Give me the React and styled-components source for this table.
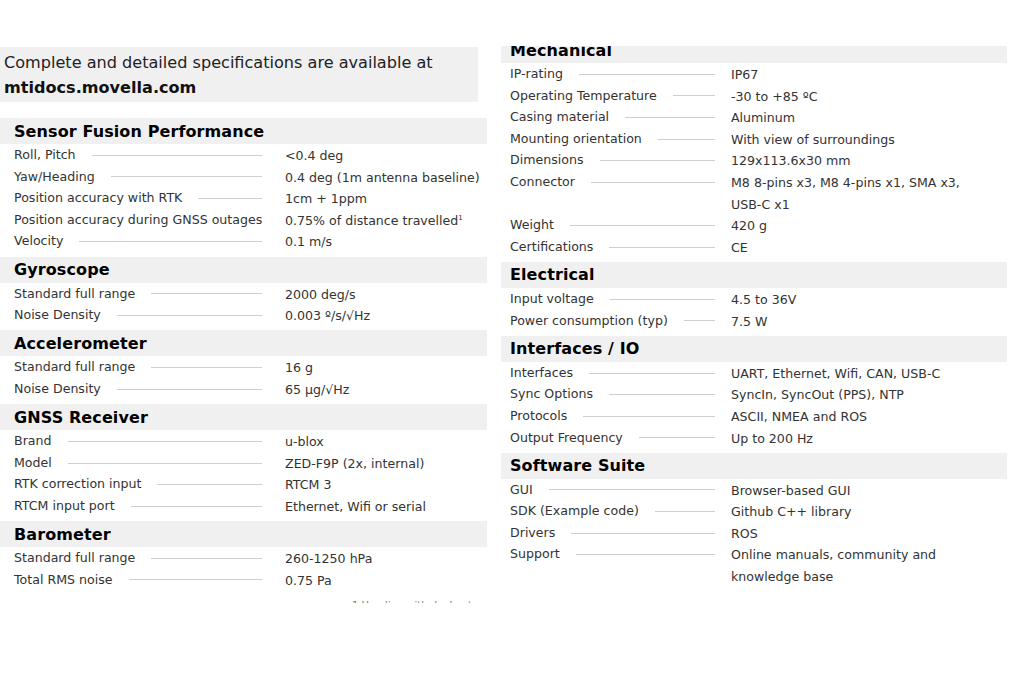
import React from 'react';
import styled, { createGlobalStyle } from 'styled-components';

const GlobalStyle = createGlobalStyle`
  html, body {
    margin: 0;
    padding: 0;
    background: #fff;
  }
  body {
    font-family: "DejaVu Sans", Verdana, sans-serif;
    color: #333;
  }
`;

const Page = styled.div`
  width: 1024px;
  height: 673px;
  display: flex;
  align-items: flex-start;
  overflow: hidden;
`;

const LeftCol = styled.div`
  width: 487px;
  padding-top: 47px;
  display: flex;
  flex-direction: column;
`;

const RightCol = styled.div`
  width: 506px;
  margin-left: 14px;
  margin-top: 46px;
  overflow: hidden;
`;

// the right column is cropped at the top, through the Mechanical header
const RightInner = styled.div`
  margin-top: -9px;
`;

const InfoBox = styled.div`
  width: 478px;
  height: 55px;
  background: #f0f0f1;
  padding: 3px 0 0 4px;
  box-sizing: border-box;
  font-size: 16.1px;
  line-height: 25px;
  color: #222;
  margin-bottom: 16px;
`;

const Strong = styled.span`
  font-weight: 700;
  color: #111;
`;

const Section = styled.section`
  margin-bottom: 4.6px;
`;

const Band = styled.h3`
  margin: 0;
  height: 26px;
  background: #f0f0f1;
  display: flex;
  align-items: center;
  padding-left: ${({ $pad }) => $pad}px;
  font-size: 16px;
  font-weight: 700;
  color: #000;
  letter-spacing: 0.1px;
`;

const Row = styled.div`
  display: grid;
  grid-template-columns: ${({ $label }) => $label}px 1fr;
  padding-left: ${({ $pad }) => $pad}px;
  font-size: 12.6px;
  line-height: 21.6px;
`;

const LabelCell = styled.div`
  display: flex;
  align-items: center;
  height: 21.6px;
  white-space: nowrap;
`;

const Leader = styled.span`
  flex: 1;
  height: 1px;
  background: #cfcfcf;
  margin: 1px ${({ $trail }) => $trail}px 0 16px;
`;

const Value = styled.div`
  white-space: pre-line;
  position: relative;
  top: 1px;
`;

const Sup = styled.sup`
  font-size: 7px;
  vertical-align: 5px;
  line-height: 0;
`;

const Clipped = styled.div`
  height: 3px;
  overflow: hidden;
  margin-top: 5px;
  padding-left: 352px;
  font-size: 10px;
  line-height: 12px;
  color: #777;
  white-space: nowrap;
`;

const left = [
  {
    title: 'Sensor Fusion Performance',
    rows: [
      ['Roll, Pitch', '<0.4 deg'],
      ['Yaw/Heading', '0.4 deg (1m antenna baseline)'],
      ['Position accuracy with RTK', '1cm + 1ppm'],
      ['Position accuracy during GNSS outages', '0.75% of distance travelled', true],
      ['Velocity', '0.1 m/s'],
    ],
  },
  {
    title: 'Gyroscope',
    rows: [
      ['Standard full range', '2000 deg/s'],
      ['Noise Density', '0.003 º/s/√Hz'],
    ],
  },
  {
    title: 'Accelerometer',
    rows: [
      ['Standard full range', '16 g'],
      ['Noise Density', '65 µg/√Hz'],
    ],
  },
  {
    title: 'GNSS Receiver',
    rows: [
      ['Brand', 'u-blox'],
      ['Model', 'ZED-F9P (2x, internal)'],
      ['RTK correction input', 'RTCM 3'],
      ['RTCM input port', 'Ethernet, Wifi or serial'],
    ],
  },
  {
    title: 'Barometer',
    rows: [
      ['Standard full range', '260-1250 hPa'],
      ['Total RMS noise', '0.75 Pa'],
    ],
  },
];

const right = [
  {
    title: 'Mechanical',
    rows: [
      ['IP-rating', 'IP67'],
      ['Operating Temperature', '-30 to +85 ºC'],
      ['Casing material', 'Aluminum'],
      ['Mounting orientation', 'With view of surroundings'],
      ['Dimensions', '129x113.6x30 mm'],
      ['Connector', 'M8 8-pins x3, M8 4-pins x1, SMA x3,\nUSB-C x1'],
      ['Weight', '420 g'],
      ['Certifications', 'CE'],
    ],
  },
  {
    title: 'Electrical',
    rows: [
      ['Input voltage', '4.5 to 36V'],
      ['Power consumption (typ)', '7.5 W'],
    ],
  },
  {
    title: 'Interfaces / IO',
    rows: [
      ['Interfaces', 'UART, Ethernet, Wifi, CAN, USB-C'],
      ['Sync Options', 'SyncIn, SyncOut (PPS), NTP'],
      ['Protocols', 'ASCII, NMEA and ROS'],
      ['Output Frequency', 'Up to 200 Hz'],
    ],
  },
  {
    title: 'Software Suite',
    rows: [
      ['GUI', 'Browser-based GUI'],
      ['SDK (Example code)', 'Github C++ library'],
      ['Drivers', 'ROS'],
      ['Support', 'Online manuals, community and\nknowledge base'],
    ],
  },
];

const SpecTable = ({ sections, pad, label, trail }) =>
  sections.map((s) => (
    <Section key={s.title}>
      <Band $pad={pad}>{s.title}</Band>
      {s.rows.map(([k, v, note]) => (
        <Row key={k} $pad={pad} $label={label}>
          <LabelCell>
            {k}
            <Leader $trail={trail} />
          </LabelCell>
          <Value>
            {v}
            {note && <Sup>1</Sup>}
          </Value>
        </Row>
      ))}
    </Section>
  ));

export default function App() {
  return (
    <>
      <GlobalStyle />
      <Page>
        <LeftCol>
          <InfoBox>
            Complete and detailed specifications are available at
            <br />
            <Strong>mtidocs.movella.com</Strong>
          </InfoBox>
          <SpecTable sections={left} pad={14} label={271} trail={23} />
          <Clipped>1 Heading with dual antenna setup in open sky</Clipped>
        </LeftCol>
        <RightCol>
          <RightInner>
            <SpecTable sections={right} pad={9} label={221} trail={16} />
          </RightInner>
        </RightCol>
      </Page>
    </>
  );
}
